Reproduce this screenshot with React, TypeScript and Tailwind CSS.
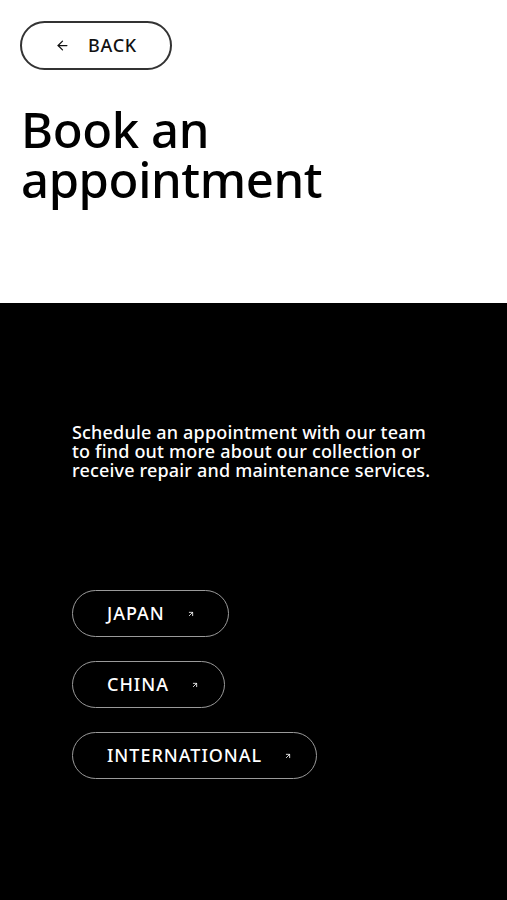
import React from 'react';
import { ArrowLeft, ArrowUpRight } from 'lucide-react';

const regions = [
  { label: 'JAPAN', width: 'w-[157px]' },
  { label: 'CHINA', width: 'w-[153px]' },
  { label: 'INTERNATIONAL', width: 'w-[245px]' },
];

export default function App() {
  return (
    <div className="min-h-[900px] w-full bg-white font-['Noto_Sans',sans-serif] flex flex-col">
      {/* Header */}
      <div className="h-[303px] px-5 pt-[21px]">
        <button className="h-[49px] w-[152px] rounded-full border-2 border-[#333] flex items-center pl-[33px] gap-[18px] text-[#111]">
          <ArrowLeft className="w-[15px] h-[15px]" strokeWidth={2} />
          <span className="text-[18px] tracking-[0.04em] font-medium">BACK</span>
        </button>
        <h1 className="mt-[34px] ml-[1px] text-[49px] leading-[50px] text-black font-medium tracking-[-0.008em]">
          Book an
          <br />
          appointment
        </h1>
      </div>

      {/* Regions */}
      <div className="flex-1 bg-black px-[72px] pt-[120px] pb-[120px]">
        <p className="text-white text-[18px] leading-[19px] font-medium tracking-[0.01em] whitespace-nowrap">
          Schedule an appointment with our team
          <br />
          to find out more about our collection or
          <br />
          receive repair and maintenance services.
        </p>

        <div className="mt-[110px] flex flex-col gap-[24px]">
          {regions.map((r) => (
            <button
              key={r.label}
              className={`${r.width} h-[47px] rounded-full border-[1.5px] border-[#9a9a9a] flex items-center pl-[34px] gap-[22px] text-white`}
            >
              <span className="text-[18px] tracking-[0.055em] font-medium">{r.label}</span>
              <ArrowUpRight className="w-[8px] h-[8px]" strokeWidth={2.5} />
            </button>
          ))}
        </div>
      </div>
    </div>
  );
}
